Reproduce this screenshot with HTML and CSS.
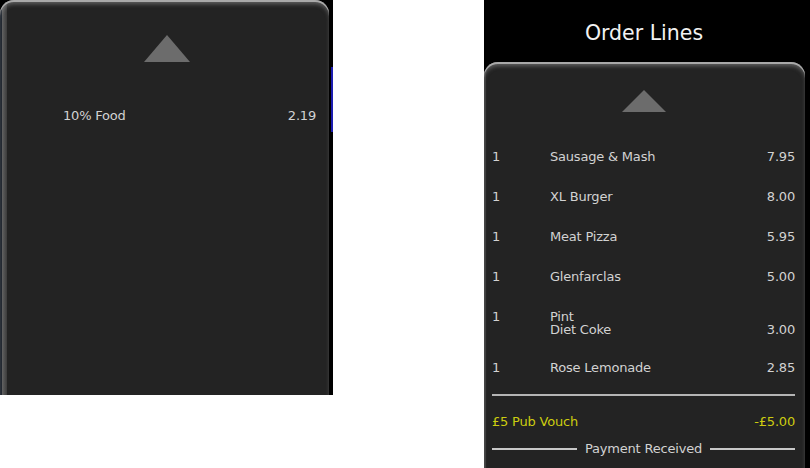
FILE: index.html
```html
<!DOCTYPE html>
<html lang="en">
<head>
    <meta charset="UTF-8">
    <title>Till - Order Lines</title>
    <link rel="stylesheet" href="styles.css">
</head>
<body>
    <div class="discounts">
        <div class="panel panel-left">
            <div class="scroll-up"></div>
            <div class="disc-row">
                <span>10% Food</span>
                <span>2.19</span>
            </div>
        </div>
        <div class="edge"></div>
        <div class="marker"></div>
    </div>

    <div class="orders">
        <div class="orders-title">Order Lines</div>
        <div class="orders-body">
            <div class="panel panel-right">
                <div class="scroll-up small"></div>
                <div class="lines">
                    <div class="line"><span class="qty">1</span><span class="name">Sausage &amp; Mash</span><span class="price">7.95</span></div>
                    <div class="line"><span class="qty">1</span><span class="name">XL Burger</span><span class="price">8.00</span></div>
                    <div class="line"><span class="qty">1</span><span class="name">Meat Pizza</span><span class="price">5.95</span></div>
                    <div class="line"><span class="qty">1</span><span class="name">Glenfarclas</span><span class="price">5.00</span></div>
                    <div class="line multi"><span class="qty">1</span><span class="name">Pint<br>Diet Coke</span><span class="price">3.00</span></div>
                    <div class="line"><span class="qty">1</span><span class="name">Rose Lemonade</span><span class="price">2.85</span></div>
                </div>
                <div class="divider"></div>
                <div class="voucher">
                    <span>£5 Pub Vouch</span>
                    <span>-£5.00</span>
                </div>
                <div class="paid">Payment Received</div>
            </div>
        </div>
    </div>
</body>
</html>
```

FILE: styles.css
```css
* {
    box-sizing: border-box;
}

body {
    margin: 0;
    width: 810px;
    height: 468px;
    background: #fff;
    display: flex;
    align-items: flex-start;
    font-family: "DejaVu Sans", Verdana, sans-serif;
    font-size: 13px;
    letter-spacing: -0.2px;
    color: #d2d2d2;
    overflow: hidden;
}

/* shared dark panel with the bevelled top */
.panel {
    background: #232323;
    border-radius: 14px 14px 0 0;
    box-shadow: inset 0 2px 0 #a9a9a9, inset 0 5px 4px -1px rgba(150, 150, 150, 0.55);
}

.scroll-up {
    width: 0;
    height: 0;
    margin: 0 auto;
    border-left: 23px solid transparent;
    border-right: 23px solid transparent;
    border-bottom: 27px solid #6c6c6c;
}

.scroll-up.small {
    border-left-width: 22px;
    border-right-width: 22px;
    border-bottom-width: 22px;
}

/* left: discounts */
.discounts {
    display: flex;
    width: 333px;
    height: 395px;
    background: #000;
}

.panel-left {
    width: 329px;
    height: 395px;
    padding: 35px 13px 0 8px;
    background: linear-gradient(to right, #1b222c 0 2px, #626262 2px, #3b3b3b 7px, #232323 7px);
}

.panel-left .scroll-up {
    margin-left: 136px;
}

.disc-row {
    display: flex;
    justify-content: space-between;
    margin-top: 45px;
    padding-left: 55px;
    line-height: 18px;
}

.edge {
    width: 2px;
}

.marker {
    width: 2px;
    height: 65px;
    margin-top: 67px;
    background: #1c1cb0;
}

/* right: order lines */
.orders {
    margin-left: auto;
    width: 326px;
    height: 468px;
    display: flex;
    flex-direction: column;
    background: #000;
}

.orders-title {
    height: 62px;
    line-height: 66px;
    text-align: center;
    font-size: 20.5px;
    letter-spacing: 0;
    color: #f2f2f2;
    padding-right: 6px;
}

.orders-body {
    flex: 1;
    display: flex;
    padding-right: 5px;
}

.panel-right {
    flex: 1;
    padding: 28px 10px 0 8px;
    box-shadow: inset 0 2px 0 #a9a9a9, inset 0 5px 4px -1px rgba(150, 150, 150, 0.55), inset 2px 0 0 #3a3a3a;
}

.lines {
    margin-top: 25px;
}

.line {
    display: grid;
    grid-template-columns: 58px 1fr auto;
    padding: 13px 0;
    line-height: 14px;
}

.line.multi {
    padding-bottom: 12px;
    line-height: 13px;
}

.line .qty {
    align-self: start;
}

.line .price {
    align-self: end;
}

.divider {
    height: 2px;
    margin-top: 6px;
    background: #b4b4b4;
}

.voucher {
    display: flex;
    justify-content: space-between;
    padding: 19px 0 13px;
    line-height: 14px;
    color: #cccc10;
}

.paid {
    display: flex;
    align-items: center;
    gap: 8px;
    line-height: 14px;
}

.paid::before,
.paid::after {
    content: "";
    flex: 1;
    height: 2px;
    background: #c8c8c8;
}
```
